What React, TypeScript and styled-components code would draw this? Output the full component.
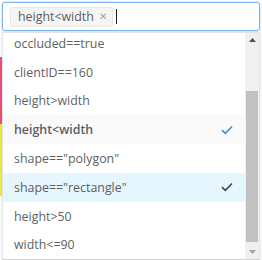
import React from "react";
import styled, { createGlobalStyle } from "styled-components";

const Global = createGlobalStyle`
  html, body { margin: 0; padding: 0; background: #ffffff; }
  body { font-family: "Open Sans", "Noto Sans", sans-serif; }
`;

const Page = styled.div`
  width: 262px;
  height: 260px;
  display: flex;
  overflow: hidden;
  background: #ffffff;
`;

const Gutter = styled.div`
  width: 2px;
  display: flex;
  flex-direction: column;
  flex-shrink: 0;
`;

const Strip = styled.div<{ $color: string; $h: number }>`
  height: ${(p) => p.$h}px;
  background: ${(p) => p.$color};
`;

const Main = styled.div`
  flex: 1;
  display: flex;
  flex-direction: column;
  padding: 2px 2px 0 0;
  gap: 1px;
  min-width: 0;
`;

const Input = styled.div`
  height: 29px;
  box-sizing: border-box;
  border: 1px solid #7ab6ec;
  border-radius: 3px;
  box-shadow: 0 0 0 1px rgba(24, 144, 255, 0.16);
  display: flex;
  align-items: center;
  padding: 0 7px;
  gap: 3px;
`;

const Tag = styled.div`
  height: 20px;
  box-sizing: border-box;
  background: #f5f5f5;
  border: 1px solid #e8e8e8;
  border-radius: 2px;
  display: flex;
  align-items: center;
  padding: 0 5px 0 7px;
  gap: 5px;
  font-size: 12.4px;
  color: #5c5c5c;
`;

const Close = styled.span`
  font-size: 9.5px;
  color: #a0a0a0;
`;

const Caret = styled.div`
  width: 1px;
  height: 15px;
  background: #222;
`;

const Dropdown = styled.div`
  flex: 1;
  display: flex;
  border: 1px solid #e4e4e4;
  border-bottom-color: #cfcfcf;
  box-shadow: 0 1px 3px rgba(0, 0, 0, 0.12);
  overflow: hidden;
  min-height: 0;
`;

const List = styled.div`
  flex: 1;
  overflow: hidden;
  min-width: 0;
`;

const Rows = styled.div`
  margin-top: -4px;
`;

const Row = styled.div<{ $bg?: string; $bold?: boolean }>`
  height: 28.8px;
  box-sizing: border-box;
  display: flex;
  align-items: center;
  justify-content: space-between;
  padding: 0 12px 0 11px;
  background: ${(p) => p.$bg || "transparent"};
  font-size: 12.4px;
  font-weight: ${(p) => (p.$bold ? 600 : 400)};
  color: #5f5f5f;
  white-space: nowrap;
`;

const Scrollbar = styled.div`
  width: 14px;
  background: #f0f0f0;
  display: flex;
  flex-direction: column;
  align-items: center;
  flex-shrink: 0;
`;

const Arrow = styled.div`
  height: 14px;
  width: 100%;
  display: flex;
  align-items: center;
  justify-content: center;
`;

const Track = styled.div`
  flex: 1;
  width: 100%;
  display: flex;
  flex-direction: column;
  padding: 44px 1px 0 1px;
  box-sizing: border-box;
`;

const Thumb = styled.div`
  height: 151px;
  background: #c1c1c1;
`;

const Check = ({ color }: { color: string }) => (
  <svg width="12" height="10" viewBox="0 0 12 10">
    <path d="M1 5.2 L4.3 8.3 L11 1.5" fill="none" stroke={color} strokeWidth="1.6" />
  </svg>
);

const Tri = ({ up }: { up: boolean }) => (
  <svg width="7" height="4" viewBox="0 0 7 4">
    <path d={up ? "M0 4 L3.5 0 L7 4 Z" : "M0 0 L3.5 4 L7 0 Z"} fill={up ? "#505050" : "#a3a3a3"} />
  </svg>
);

const items: { label: string; bg?: string; bold?: boolean; check?: string }[] = [
  { label: "occluded==true" },
  { label: "clientID==160" },
  { label: "height>width" },
  { label: "height<width", bg: "#fafafa", bold: true, check: "#3d8fe0" },
  { label: 'shape=="polygon"' },
  { label: 'shape=="rectangle"', bg: "#e6f6fe", check: "#444" },
  { label: "height>50" },
  { label: "width<=90" },
];

export default function App() {
  return (
    <Page>
      <Global />
      <Gutter>
        <Strip $color="transparent" $h={57} />
        <Strip $color="#f0507a" $h={67} />
        <Strip $color="#eef03a" $h={72} />
      </Gutter>
      <Main>
        <Input>
          <Tag>
            height&lt;width
            <Close>✕</Close>
          </Tag>
          <Caret />
        </Input>
        <Dropdown>
          <List>
            <Rows>
              {items.map((it) => (
                <Row key={it.label} $bg={it.bg} $bold={it.bold}>
                  <span>{it.label}</span>
                  {it.check && <Check color={it.check} />}
                </Row>
              ))}
            </Rows>
          </List>
          <Scrollbar>
            <Arrow>
              <Tri up />
            </Arrow>
            <Track>
              <Thumb />
            </Track>
            <Arrow>
              <Tri up={false} />
            </Arrow>
          </Scrollbar>
        </Dropdown>
      </Main>
    </Page>
  );
}
